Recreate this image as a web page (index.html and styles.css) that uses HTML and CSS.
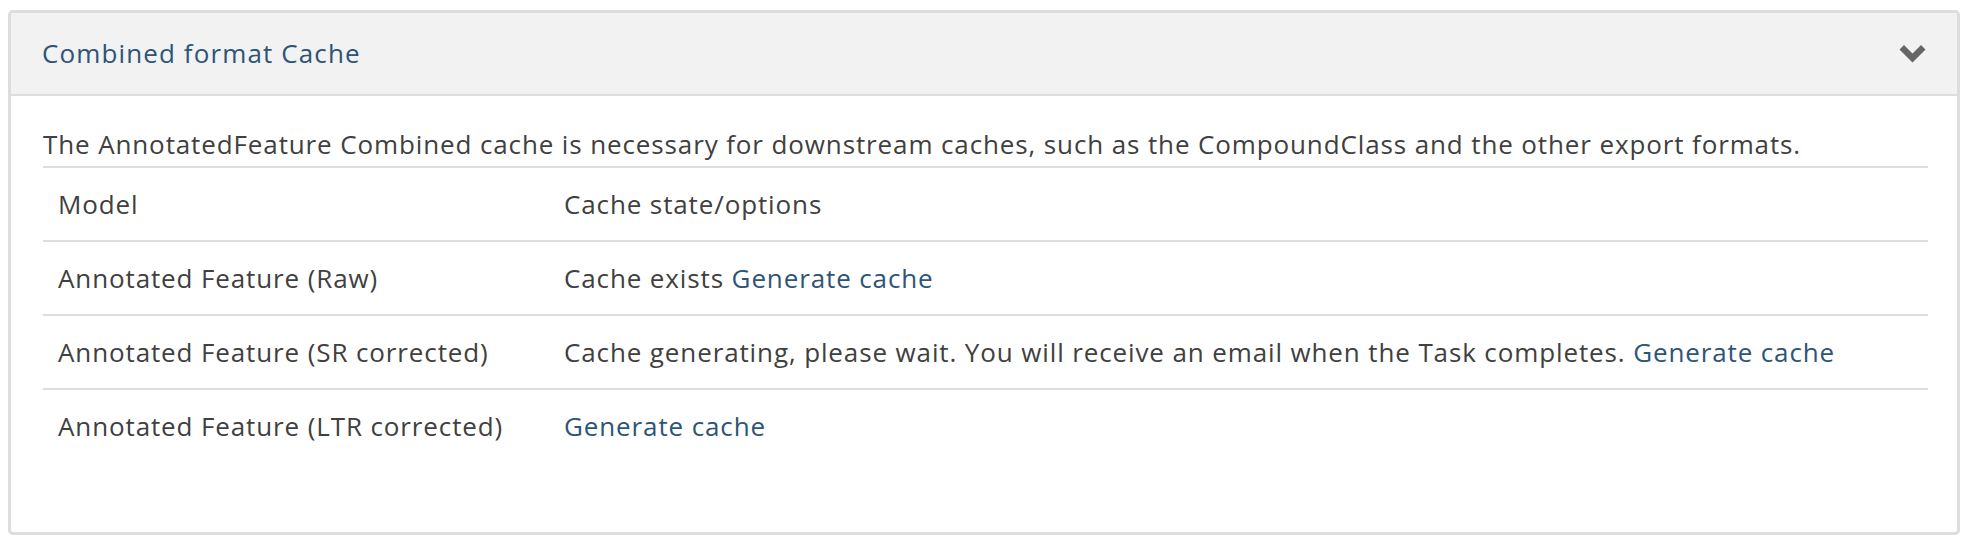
FILE: index.html
```html
<!DOCTYPE html>
<html lang="en">
<head>
<meta charset="utf-8">
<title>Combined format Cache</title>
<link rel="stylesheet" href="styles.css">
</head>
<body>
<div class="panel">
  <div class="panel-heading">
    <h4 class="panel-title">Combined format Cache</h4>
    <svg class="chevron" width="27" height="19" viewBox="0 0 27 19" aria-hidden="true">
      <polygon points="0.5,5.5 5,1 13.5,9.5 22,1 26.5,5.5 13.5,18.5" fill="#666"/>
    </svg>
  </div>
  <div class="panel-body">
    <p class="intro">The AnnotatedFeature Combined cache is necessary for downstream caches, such as the CompoundClass and the other export formats.</p>
    <table class="cache-table">
      <thead>
        <tr><th class="col-model">Model</th><th>Cache state/options</th></tr>
      </thead>
      <tbody>
        <tr><td>Annotated Feature (Raw)</td><td>Cache exists <a href="#">Generate cache</a></td></tr>
        <tr><td>Annotated Feature (SR corrected)</td><td>Cache generating, please wait. You will receive an email when the Task completes. <a href="#">Generate cache</a></td></tr>
        <tr><td>Annotated Feature (LTR corrected)</td><td><a href="#">Generate cache</a></td></tr>
      </tbody>
    </table>
  </div>
</div>
</body>
</html>
```

FILE: styles.css
```css
html, body {
  background: #ffffff;
}
body {
  margin: 8px;
  font-family: "Open Sans", "Liberation Sans", sans-serif;
  font-size: 26px;
  letter-spacing: 0.88px;
  color: #404040;
}
.panel {
  margin-top: 2px;
  border: 3px solid #dddddd;
  border-radius: 5px;
  background: #ffffff;
  overflow: hidden;
}
.panel-heading {
  display: flex;
  align-items: center;
  justify-content: space-between;
  padding: 22px 31px 22px 31px;
  background: #f2f2f2;
  border-bottom: 2px solid #dddddd;
}
.panel-title {
  margin: 0;
  font-size: 26px;
  font-weight: 400;
  line-height: 37px;
  letter-spacing: 1.12px;
  color: #2d5479;
}
.chevron {
  display: block;
}
.panel-body {
  padding: 30px 29px 30px 32px;
}
.intro {
  margin: 0 0 3px 0;
  line-height: 37px;
}
.cache-table {
  width: 100%;
  border-collapse: separate;
  border-spacing: 0;
  margin-bottom: 40px;
}
.cache-table th,
.cache-table td {
  border-top: 2px solid #dddddd;
  padding: 17px 15px;
  line-height: 38px;
  text-align: left;
  font-weight: 400;
  vertical-align: top;
}
.cache-table .col-model {
  width: 476px;
}
.cache-table a {
  color: #2d5479;
  text-decoration: none;
}
```
